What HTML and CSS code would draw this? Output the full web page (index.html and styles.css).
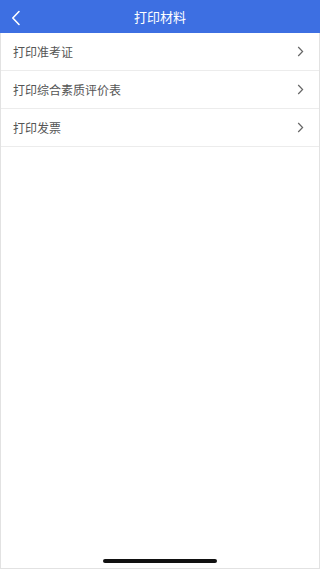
FILE: index.html
```html
<!DOCTYPE html>
<html lang="zh-CN">
<head>
    <meta charset="UTF-8">
    <meta name="viewport" content="width=device-width, initial-scale=1.0">
    <title>打印材料</title>
    <link rel="stylesheet" href="styles.css">
</head>
<body>
    <div class="page">
        <div class="header">
            <svg class="back" width="10" height="16" viewBox="0 0 10 16">
                <path d="M8 1.5 L1.8 8 L8 14.5" fill="none" stroke="#fff" stroke-width="1.6" stroke-linecap="round" stroke-linejoin="round"/>
            </svg>
            <p class="title">打印材料</p>
        </div>
        <div class="content">
            <div class="list">
                <div class="list-item">
                    <span>打印准考证</span>
                    <svg class="arrow" width="7" height="11" viewBox="0 0 7 11"><path d="M1.2 1 L5.6 5.5 L1.2 10" fill="none" stroke="#666" stroke-width="1.2"/></svg>
                </div>
                <div class="list-item">
                    <span>打印综合素质评价表</span>
                    <svg class="arrow" width="7" height="11" viewBox="0 0 7 11"><path d="M1.2 1 L5.6 5.5 L1.2 10" fill="none" stroke="#666" stroke-width="1.2"/></svg>
                </div>
                <div class="list-item">
                    <span>打印发票</span>
                    <svg class="arrow" width="7" height="11" viewBox="0 0 7 11"><path d="M1.2 1 L5.6 5.5 L1.2 10" fill="none" stroke="#666" stroke-width="1.2"/></svg>
                </div>
            </div>
            <div class="home-bar"></div>
        </div>
    </div>
</body>
</html>
```

FILE: styles.css
```css
html, body {
    margin: 0;
    padding: 0;
}
body {
    font-family: "Noto Sans CJK SC", "Noto Sans", sans-serif;
    background: #fff;
    color: #555;
}
.page {
    width: 320px;
    height: 569px;
    display: flex;
    flex-direction: column;
}
.header {
    height: 33px;
    background: #3d6fe2;
    display: flex;
    align-items: center;
    position: relative;
    flex-shrink: 0;
}
.back {
    position: absolute;
    left: 11px;
    top: 10px;
}
.title {
    margin: 0;
    width: 100%;
    text-align: center;
    color: #fff;
    font-size: 13px;
}
.content {
    flex: 1;
    display: flex;
    flex-direction: column;
    justify-content: space-between;
    border: 1px solid #e2e2e2;
    border-top: none;
}
.list-item {
    height: 37px;
    border-bottom: 1px solid #ececec;
    display: flex;
    align-items: center;
    justify-content: space-between;
    padding: 0 15px 0 12px;
    font-size: 12px;
}
.home-bar {
    width: 114px;
    height: 4px;
    border-radius: 2px;
    background: #111;
    margin: 0 auto 5px;
}
```
